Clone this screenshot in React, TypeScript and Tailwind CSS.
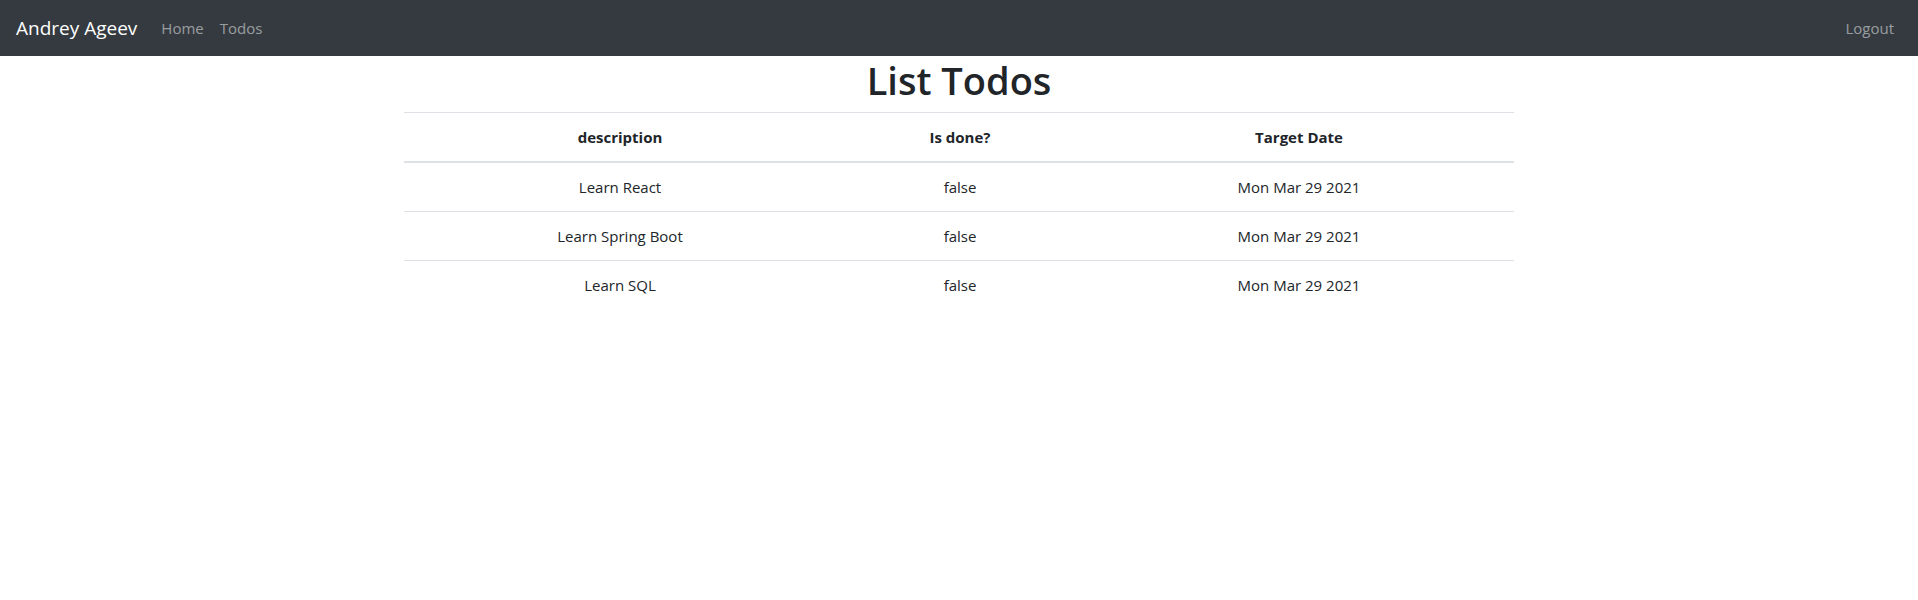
const todos = [
  { id: 1, description: 'Learn React', done: false, targetDate: 'Mon Mar 29 2021' },
  { id: 2, description: 'Learn Spring Boot', done: false, targetDate: 'Mon Mar 29 2021' },
  { id: 3, description: 'Learn SQL', done: false, targetDate: 'Mon Mar 29 2021' },
];

export default function App() {
  return (
    <div className="min-h-[600px] bg-white text-[#212529] font-['Open_Sans',sans-serif] text-[15px] leading-6">
      <nav className="h-14 bg-[#343a40] flex items-center px-4">
        <a className="text-[19px] leading-[30px] text-white mr-4 py-[5px]">Andrey Ageev</a>
        <ul className="flex">
          <li><a className="px-2 py-2 block text-white/50">Home</a></li>
          <li><a className="px-2 py-2 block text-white/50">Todos</a></li>
        </ul>
        <ul className="flex ml-auto">
          <li><a className="px-2 py-2 block text-white/50">Logout</a></li>
        </ul>
      </nav>

      <div className="w-[1140px] mx-auto px-[15px] text-center">
        <h1 className="text-[38px] leading-[48px] font-semibold mb-2">List Todos</h1>
        <table className="w-full mb-4">
          <thead>
            <tr>
              <th className="w-[432px] p-3 font-bold border-t border-b-2 border-[#dee2e6]">description</th>
              <th className="w-[248px] p-3 font-bold border-t border-b-2 border-[#dee2e6]">Is done?</th>
              <th className="p-3 font-bold border-t border-b-2 border-[#dee2e6]">Target Date</th>
            </tr>
          </thead>
          <tbody>
            {todos.map((todo) => (
              <tr key={todo.id}>
                <td className="p-3 border-t border-[#dee2e6]">{todo.description}</td>
                <td className="p-3 border-t border-[#dee2e6]">{todo.done.toString()}</td>
                <td className="p-3 border-t border-[#dee2e6]">{todo.targetDate}</td>
              </tr>
            ))}
          </tbody>
        </table>
      </div>
    </div>
  );
}
